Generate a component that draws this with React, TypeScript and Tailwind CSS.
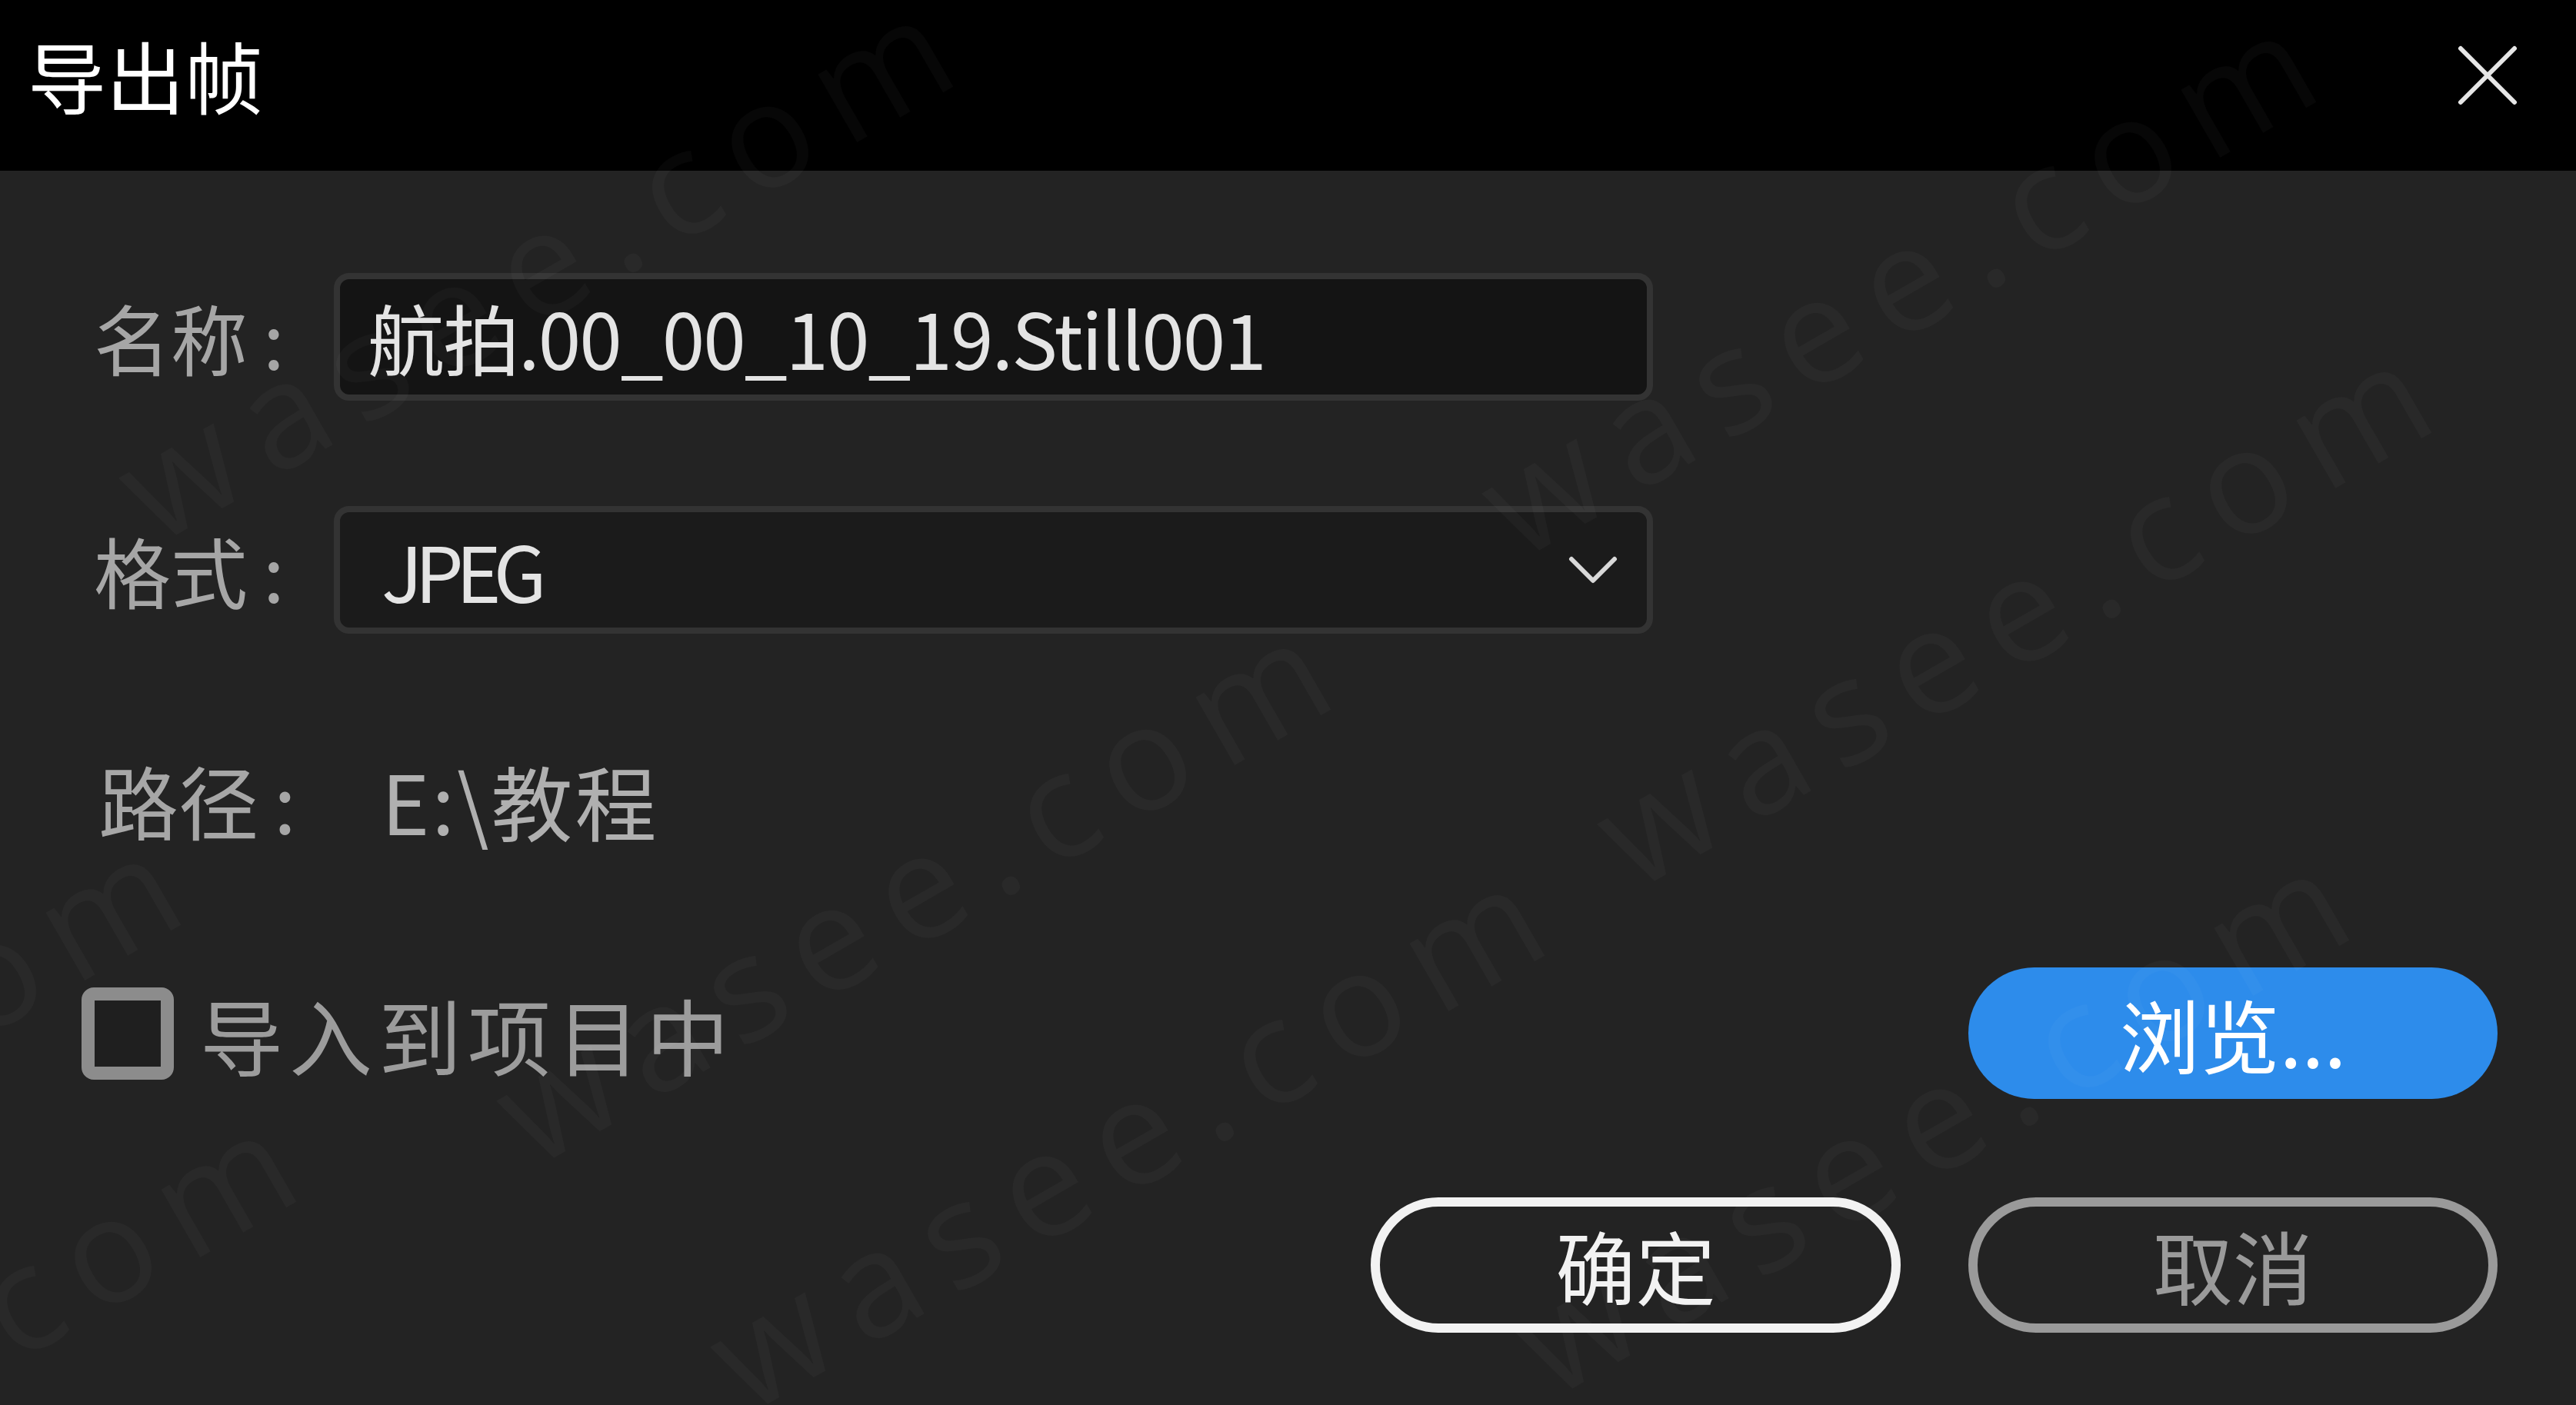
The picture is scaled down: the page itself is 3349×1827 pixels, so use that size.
const Chevron = () => (
  <svg width="64" height="36" viewBox="0 0 64 36" fill="none">
    <polyline points="4,4 32,32 60,4" stroke="#d9d9d9" strokeWidth="6" strokeLinecap="round" strokeLinejoin="round" />
  </svg>
);

const CloseIcon = () => (
  <svg width="78" height="78" viewBox="0 0 78 78" fill="none">
    <path d="M4 4 L74 74 M74 4 L4 74" stroke="#e6e6e6" strokeWidth="6" strokeLinecap="round" />
  </svg>
);

const Watermark = () => (
  <div className="pointer-events-none absolute inset-0 overflow-hidden text-[190px] leading-none tracking-[28px] text-white/[0.028] font-['Open_Sans',sans-serif]">
    <span className="absolute left-[214px] top-[540px] origin-bottom-left -rotate-30">wasee.com</span>
    <span className="absolute left-[1986px] top-[560px] origin-bottom-left -rotate-30">wasee.com</span>
    <span className="absolute left-[705px] top-[1350px] origin-bottom-left -rotate-30">wasee.com</span>
    <span className="absolute left-[2136px] top-[990px] origin-bottom-left -rotate-30">wasee.com</span>
    <span className="absolute left-[983px] top-[1670px] origin-bottom-left -rotate-30">wasee.com</span>
    <span className="absolute left-[2029px] top-[1650px] origin-bottom-left -rotate-30">wasee.com</span>
    <span className="absolute left-[-640px] top-[1990px] origin-bottom-left -rotate-30">wasee.com</span>
    <span className="absolute left-[-790px] top-[1630px] origin-bottom-left -rotate-30">wasee.com</span>
  </div>
);

const App = () => {
  return (
    <div className="relative w-[3349px] h-[1827px] overflow-hidden bg-[#232323] font-['Noto_Sans_CJK_SC',sans-serif]">
      <header className="flex h-[222px] items-center justify-between bg-black pl-[36px] pr-[76px]">
        <h1 className="-mt-[28px] text-[102px] leading-none text-white">导出帧</h1>
        <button className="-mt-[26px]">
          <CloseIcon />
        </button>
      </header>

      <main className="flex flex-col px-[102px]">
        <div className="mt-[133px] flex h-[166px] items-center pl-[20px]">
          <span className="w-[312px] text-[100px] leading-none text-[#a6a6a6]">
            名称<span className="ml-[20px]">:</span>
          </span>
          <div className="flex h-[166px] w-[1715px] items-center rounded-[20px] border-[8px] border-[#333333] bg-[#141414] pl-[36px] text-[100px] leading-none tracking-[-2px] text-[#e4e4e4]">
            航拍.00_00_10_19.Still001
          </div>
        </div>

        <div className="mt-[137px] flex h-[166px] items-center pl-[20px]">
          <span className="w-[312px] text-[100px] leading-none text-[#a6a6a6]">
            格式<span className="ml-[20px]">:</span>
          </span>
          <div className="flex h-[166px] w-[1715px] items-center justify-between rounded-[20px] border-[8px] border-[#333333] bg-[#1b1b1b] pl-[54px] pr-[38px] text-[100px] leading-none text-[#e4e4e4]">
            <span className="tracking-[-10px]">JPEG</span>
            <Chevron />
          </div>
        </div>

        <div className="mt-[133px] flex h-[166px] items-center pl-[26px]">
          <span className="w-[368px] text-[104px] leading-none text-[#a6a6a6]">
            路径<span className="ml-[20px]">:</span>
          </span>
          <span className="text-[106px] leading-none tracking-[3px] text-[#b0b0b0]">E:\教程</span>
        </div>

        <div className="mt-[135px] flex h-[171px] items-center justify-between">
          <label className="ml-[4px] flex items-center">
            <span className="h-[120px] w-[120px] rounded-[16px] border-[17px] border-[#8c8c8c] bg-[#1f1f1f]" />
            <span className="ml-[34px] text-[108px] leading-none tracking-[8px] text-[#9c9c9c]">导入到项目中</span>
          </label>
          <button className="flex h-[171px] w-[688px] items-center justify-center rounded-full bg-[#2d8ceb] text-[104px] leading-none text-white">
            浏览...
          </button>
        </div>

        <div className="mt-[128px] flex justify-end gap-[88px]">
          <button className="flex h-[176px] w-[689px] items-center justify-center rounded-full border-[12px] border-[#f2f2f2] text-[104px] leading-none text-[#f2f2f2]">
            确定
          </button>
          <button className="flex h-[176px] w-[688px] items-center justify-center rounded-full border-[12px] border-[#9a9a9a] text-[104px] leading-none text-[#9a9a9a]">
            取消
          </button>
        </div>
      </main>

      <Watermark />
    </div>
  );
};

export default App;
